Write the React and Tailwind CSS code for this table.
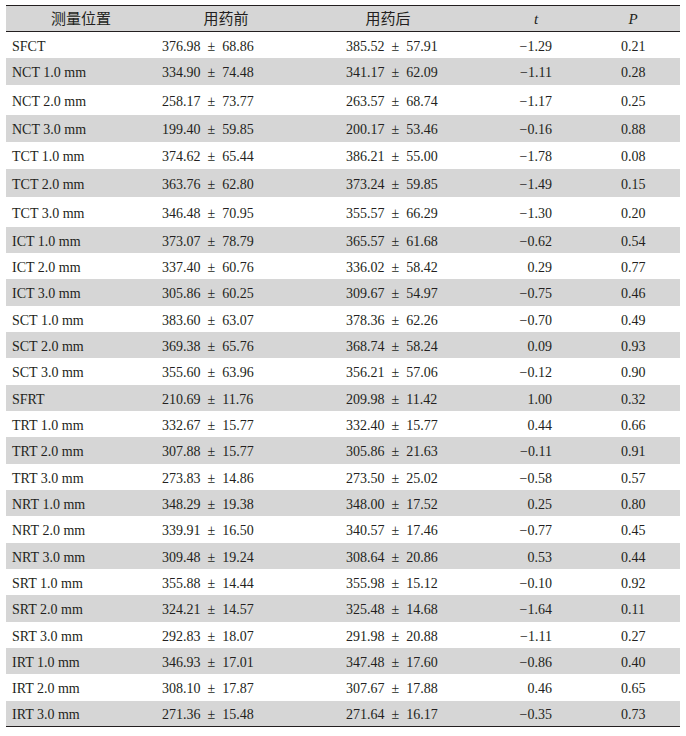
const ROWS = [
  ['SFCT', '376.98', '68.86', '385.52', '57.91', '−1.29', '0.21', 'h-[26px]'],
  ['NCT 1.0 mm', '334.90', '74.48', '341.17', '62.09', '−1.11', '0.28', 'h-[27px]'],
  ['NCT 2.0 mm', '258.17', '73.77', '263.57', '68.74', '−1.17', '0.25', 'h-[30px]'],
  ['NCT 3.0 mm', '199.40', '59.85', '200.17', '53.46', '−0.16', '0.88', 'h-[27px]'],
  ['TCT 1.0 mm', '374.62', '65.44', '386.21', '55.00', '−1.78', '0.08', 'h-[27px]'],
  ['TCT 2.0 mm', '363.76', '62.80', '373.24', '59.85', '−1.49', '0.15', 'h-[28px]'],
  ['TCT 3.0 mm', '346.48', '70.95', '355.57', '66.29', '−1.30', '0.20', 'h-[30px]'],
  ['ICT 1.0 mm', '373.07', '78.79', '365.57', '61.68', '−0.62', '0.54', 'h-[26px]'],
  ['ICT 2.0 mm', '337.40', '60.76', '336.02', '58.42', '0.29', '0.77', 'h-[26px]'],
  ['ICT 3.0 mm', '305.86', '60.25', '309.67', '54.97', '−0.75', '0.46', 'h-[27px]'],
  ['SCT 1.0 mm', '383.60', '63.07', '378.36', '62.26', '−0.70', '0.49', 'h-[26px]'],
  ['SCT 2.0 mm', '369.38', '65.76', '368.74', '58.24', '0.09', '0.93', 'h-[26px]'],
  ['SCT 3.0 mm', '355.60', '63.96', '356.21', '57.06', '−0.12', '0.90', 'h-[27px]'],
  ['SFRT', '210.69', '11.76', '209.98', '11.42', '1.00', '0.32', 'h-[26px]'],
  ['TRT 1.0 mm', '332.67', '15.77', '332.40', '15.77', '0.44', '0.66', 'h-[26px]'],
  ['TRT 2.0 mm', '307.88', '15.77', '305.86', '21.63', '−0.11', '0.91', 'h-[27px]'],
  ['TRT 3.0 mm', '273.83', '14.86', '273.50', '25.02', '−0.58', '0.57', 'h-[26px]'],
  ['NRT 1.0 mm', '348.29', '19.38', '348.00', '17.52', '0.25', '0.80', 'h-[26px]'],
  ['NRT 2.0 mm', '339.91', '16.50', '340.57', '17.46', '−0.77', '0.45', 'h-[27px]'],
  ['NRT 3.0 mm', '309.48', '19.24', '308.64', '20.86', '0.53', '0.44', 'h-[26px]'],
  ['SRT 1.0 mm', '355.88', '14.44', '355.98', '15.12', '−0.10', '0.92', 'h-[26px]'],
  ['SRT 2.0 mm', '324.21', '14.57', '325.48', '14.68', '−1.64', '0.11', 'h-[27px]'],
  ['SRT 3.0 mm', '292.83', '18.07', '291.98', '20.88', '−1.11', '0.27', 'h-[26px]'],
  ['IRT 1.0 mm', '346.93', '17.01', '347.48', '17.60', '−0.86', '0.40', 'h-[26px]'],
  ['IRT 2.0 mm', '308.10', '17.87', '307.67', '17.88', '0.46', '0.65', 'h-[27px]'],
  ['IRT 3.0 mm', '271.36', '15.48', '271.64', '16.17', '−0.35', '0.73', 'h-[25px]'],
]

const COLS = 'grid grid-cols-[144px_152px_172px_124px_82px]'

export default function App() {
  return (
    <div className="w-[686px] h-[736px] bg-white text-[#231f20] text-[14px] font-['Liberation_Serif','Noto_Sans_CJK_SC',serif] pt-[5px]">
      <div className="ml-[6px] w-[674px] border-t-[1.5px] border-b-[1.5px] border-[#231f20]">
        <div className={`${COLS} h-[26px] items-center pt-[2px] bg-[#d6d6d6] border-b border-[#231f20] text-[15px]`}>
          <div className="text-center pl-[6px]">测量位置</div>
          <div className="text-center">用药前</div>
          <div className="text-center">用药后</div>
          <div className="text-center italic">t</div>
          <div className="text-center italic pr-3">P</div>
        </div>
        {ROWS.map((r, i) => (
          <div key={r[0]} className={`${COLS} ${r[7]} items-center pt-[2px] ${i % 2 === 1 ? 'bg-[#d6d6d6]' : 'bg-white'}`}>
            <div className="pl-[6px] whitespace-nowrap">{r[0]}</div>
            <div className="pl-[12px] whitespace-nowrap">{r[1]}{'\u2002±\u2002'}{r[2]}</div>
            <div className="pl-[44px] whitespace-nowrap">{r[3]}{'\u2002±\u2002'}{r[4]}</div>
            <div className="text-right pr-[46px]">{r[5]}</div>
            <div className="pl-[23px]">{r[6]}</div>
          </div>
        ))}
      </div>
    </div>
  )
}
